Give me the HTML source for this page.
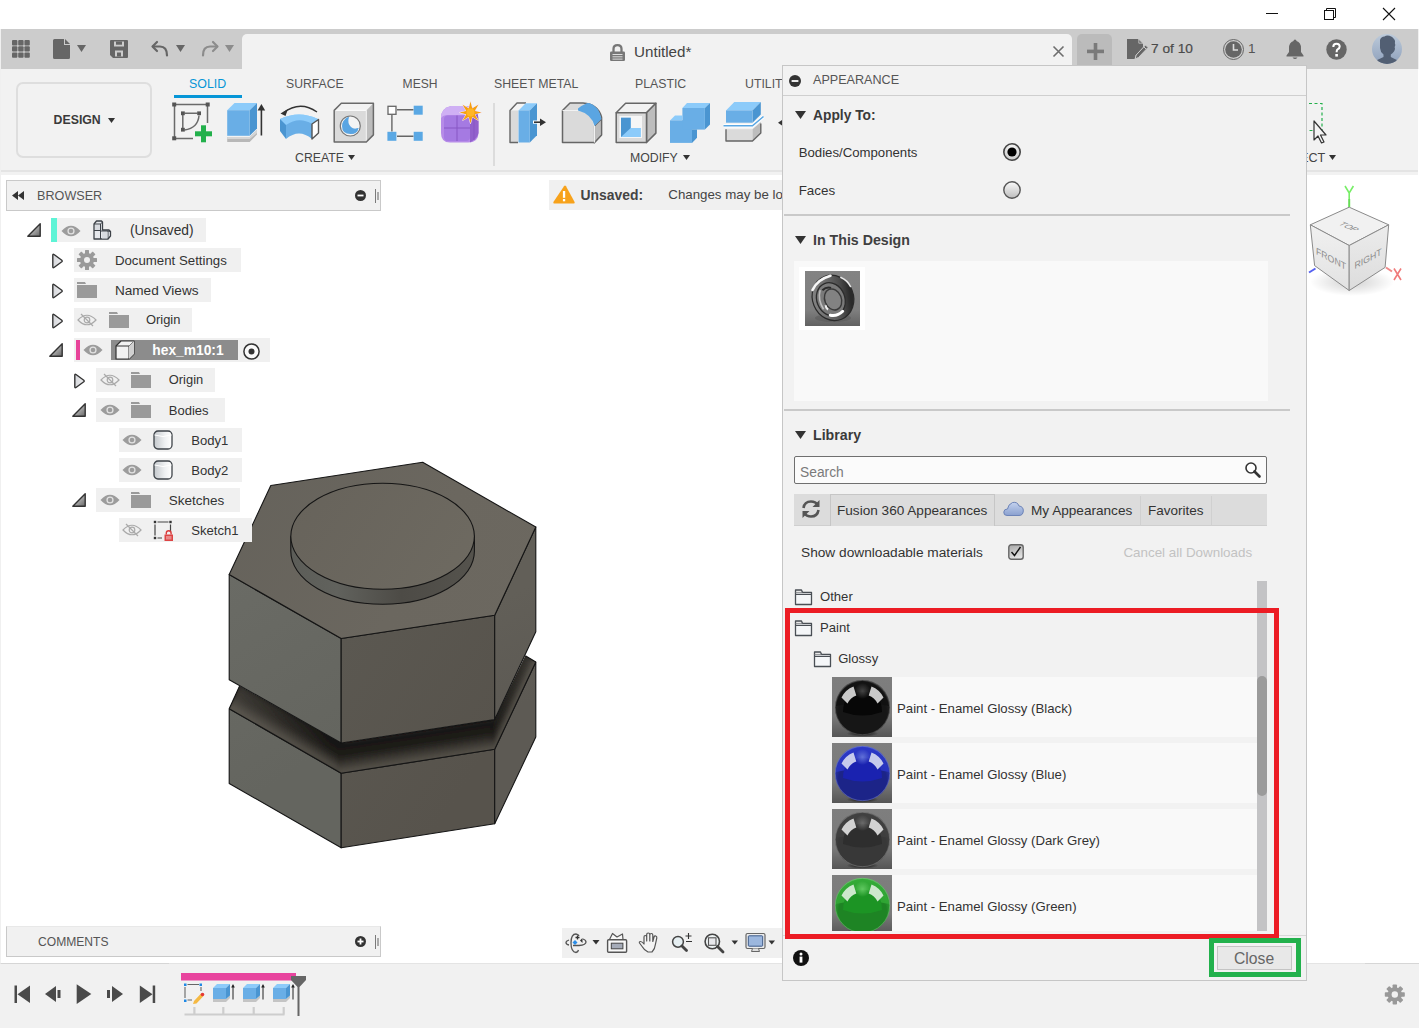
<!DOCTYPE html>
<html><head><meta charset="utf-8">
<style>
*{box-sizing:border-box;margin:0;padding:0}
html,body{width:1419px;height:1028px;overflow:hidden;background:#fff;font-family:"Liberation Sans",sans-serif;color:#3c3c3c}
.a{position:absolute}
.t{position:absolute;white-space:nowrap;line-height:1}
svg{position:absolute;overflow:visible}
</style></head><body>
<div class="a" style="left:0px;top:0px;width:1419px;height:29px;background:#fff;"></div>
<svg style="left:1266px;top:13px;" width="12" height="2" viewBox="0 0 12 2"><rect x="0" y="0" width="12" height="1" fill="#111"/></svg>
<svg style="left:1324px;top:8px;" width="12" height="12" viewBox="0 0 12 12"><rect x="0.5" y="2.5" width="9" height="9" fill="none" stroke="#111"/><path d="M2.5 2.5V0.5H11.5V9.5H9.5" fill="none" stroke="#111"/></svg>
<svg style="left:1383px;top:8px;" width="12" height="12" viewBox="0 0 12 12"><path d="M0 0L12 12M12 0L0 12" stroke="#111" stroke-width="1.1"/></svg>
<div class="a" style="left:1px;top:29px;width:1417px;height:40px;background:#cccccc;"></div>
<div class="a" style="left:242px;top:34px;width:830px;height:36px;background:#f2f2f2;border-radius:5px 5px 0 0"></div>
<div class="a" style="left:1077px;top:34px;width:35px;height:31px;background:#bbbbbb;border-radius:5px 5px 0 0"></div>
<svg style="left:12px;top:40px;" width="18" height="18" viewBox="0 0 18 18"><rect x="0.0" y="0.0" width="5.4" height="5.4" rx="1" fill="#666666"/><rect x="6.2" y="0.0" width="5.4" height="5.4" rx="1" fill="#666666"/><rect x="12.4" y="0.0" width="5.4" height="5.4" rx="1" fill="#666666"/><rect x="0.0" y="6.2" width="5.4" height="5.4" rx="1" fill="#666666"/><rect x="6.2" y="6.2" width="5.4" height="5.4" rx="1" fill="#666666"/><rect x="12.4" y="6.2" width="5.4" height="5.4" rx="1" fill="#666666"/><rect x="0.0" y="12.4" width="5.4" height="5.4" rx="1" fill="#666666"/><rect x="6.2" y="12.4" width="5.4" height="5.4" rx="1" fill="#666666"/><rect x="12.4" y="12.4" width="5.4" height="5.4" rx="1" fill="#666666"/></svg>
<svg style="left:53px;top:39px;" width="18" height="20" viewBox="0 0 18 20"><path d="M1.5 0H11V6H17V18.5Q17 20 15.5 20H1.5Q0 20 0 18.5V1.5Q0 0 1.5 0Z" fill="#666666"/><path d="M12 0L17 5H12Z" fill="#666666"/></svg>
<svg style="left:77px;top:45px;" width="9" height="7" viewBox="0 0 9 7"><path d="M0 0H9L4.5 7Z" fill="#666666"/></svg>
<svg style="left:110px;top:40px;" width="18" height="18" viewBox="0 0 18 18"><path d="M1 0H17Q18 0 18 1V17Q18 18 17 18H3L0 15V1Q0 0 1 0Z" fill="#666666"/><rect x="4" y="1.5" width="10" height="5" fill="#cccccc"/><rect x="6" y="1.5" width="6" height="3.2" fill="#666666"/><rect x="5" y="10.5" width="8" height="6" fill="#cccccc"/><rect x="7" y="12.5" width="4" height="4" fill="#666666"/></svg>
<svg style="left:151px;top:41px;" width="18" height="16" viewBox="0 0 18 16"><path d="M6 1L1.5 5.5L6 10" fill="none" stroke="#666666" stroke-width="2.2" stroke-linecap="round" stroke-linejoin="round"/><path d="M2 5.5H9Q16 5.5 16 14.5" fill="none" stroke="#666666" stroke-width="2.2" stroke-linecap="round"/></svg>
<svg style="left:176px;top:45px;" width="9" height="7" viewBox="0 0 9 7"><path d="M0 0H9L4.5 7Z" fill="#666666"/></svg>
<svg style="left:201px;top:41px;" width="18" height="16" viewBox="0 0 18 16"><path d="M12 1L16.5 5.5L12 10" fill="none" stroke="#8c8c8c" stroke-width="2.2" stroke-linecap="round" stroke-linejoin="round"/><path d="M16 5.5H9Q2 5.5 2 14.5" fill="none" stroke="#8c8c8c" stroke-width="2.2" stroke-linecap="round"/></svg>
<svg style="left:225px;top:45px;" width="9" height="7" viewBox="0 0 9 7"><path d="M0 0H9L4.5 7Z" fill="#8c8c8c"/></svg>
<svg style="left:610px;top:44px;" width="15" height="17" viewBox="0 0 15 17"><path d="M3.5 8V5Q3.5 1.2 7.5 1.2Q11.5 1.2 11.5 5V8" fill="none" stroke="#777" stroke-width="2.3"/><rect x="0" y="7.5" width="15" height="9.5" rx="1.2" fill="#777"/><rect x="2.5" y="10" width="10" height="1" fill="#ddd"/><rect x="2.5" y="12.3" width="10" height="1" fill="#ddd"/><rect x="2.5" y="14.6" width="10" height="1" fill="#ddd"/></svg>
<div class="t" style="left:634px;top:44px;font-size:15.2px;color:#444;font-weight:400;">Untitled*</div>
<svg style="left:1053px;top:46px;" width="11" height="11" viewBox="0 0 11 11"><path d="M0.5 0.5L10.5 10.5M10.5 0.5L0.5 10.5" stroke="#6e6e6e" stroke-width="1.6"/></svg>
<svg style="left:1087px;top:43px;" width="17" height="17" viewBox="0 0 17 17"><rect x="0" y="6.6" width="17" height="3.6" fill="#7a7a7a"/><rect x="6.7" y="0" width="3.6" height="17" fill="#7a7a7a"/></svg>
<svg style="left:1127px;top:39px;" width="21" height="20" viewBox="0 0 21 20"><path d="M0 0H11L16 5V8.5L8.5 16.5V20H0Z" fill="#666666"/><path d="M11.8 0.3L15.7 4.2H11.8Z" fill="#666666" stroke="#ccc" stroke-width="0.8"/><path d="M18.5 6L21 8.5L11.5 18.5L8 20L9.2 16Z" fill="#666666" stroke="#cccccc" stroke-width="1"/><path d="M16.8 7.8L19.2 10.2" stroke="#ccc" stroke-width="1"/></svg>
<div class="t" style="left:1151px;top:42px;font-size:13.7px;color:#4a4a4a;font-weight:400;-webkit-text-stroke:0.2px #4a4a4a">7 of 10</div>
<svg style="left:1223px;top:39px;" width="21" height="21" viewBox="0 0 21 21"><circle cx="10.5" cy="10.5" r="10" fill="none" stroke="#666666" stroke-width="1"/><circle cx="10.5" cy="10.5" r="8.3" fill="#666666"/><path d="M10.5 5V11H15" fill="none" stroke="#ddd" stroke-width="1.6"/></svg>
<div class="t" style="left:1248px;top:42px;font-size:13.5px;color:#555;font-weight:400;">1</div>
<svg style="left:1286px;top:39px;" width="18" height="21" viewBox="0 0 18 21"><path d="M9 0.5Q10.5 0.5 10.5 2Q15 3.5 15 9V13L17.5 16.5V17.5H0.5V16.5L3 13V9Q3 3.5 7.5 2Q7.5 0.5 9 0.5Z" fill="#666666"/><path d="M6.5 18.5Q9 21.5 11.5 18.5Z" fill="#666666"/></svg>
<svg style="left:1326px;top:39px;" width="21" height="21" viewBox="0 0 21 21"><circle cx="10.5" cy="10.5" r="10.2" fill="#666666"/><path d="M7.3 8Q7.3 4.8 10.5 4.8Q13.7 4.8 13.7 7.6Q13.7 9.4 11.6 10.4Q10.6 11 10.6 13.2" fill="none" stroke="#fff" stroke-width="2"/><rect x="9.3" y="15" width="2.6" height="2.6" fill="#fff"/></svg>
<svg style="left:1372px;top:34px;" width="30" height="30" viewBox="0 0 30 30"><defs><linearGradient id="avg" x1="0" y1="0" x2="0" y2="1"><stop offset="0" stop-color="#bccada"/><stop offset="1" stop-color="#8fa1bc"/></linearGradient><clipPath id="avc"><circle cx="15" cy="15" r="15"/></clipPath></defs><circle cx="15" cy="15" r="15" fill="url(#avg)"/><g clip-path="url(#avc)" fill="#525f73"><path d="M8 6Q9 2.5 12.5 2.5Q14.5 0.8 17.5 1.8Q20.5 2.5 22 5Q23.6 7 22.8 9Q23.8 11.5 22.6 13Q23.6 15.5 22 17.5Q20.5 19.5 18.8 20.5V23Q22 24.5 26 26.5L31 31H-1L4 26.5Q8 24.5 11.5 23V20.5Q8.3 18 8 14Z"/></g></svg>
<div class="a" style="left:1px;top:69px;width:1417px;height:102px;background:#f2f2f2;"></div>
<div class="a" style="left:1px;top:170px;width:1417px;height:2px;background:#e4e4e4;"></div>
<div class="a" style="left:1px;top:172px;width:1417px;height:3px;background:#f2f2f2;"></div>
<div class="a" style="left:0px;top:29px;width:1px;height:999px;background:#f0f0f0;"></div>
<div class="a" style="left:1418px;top:29px;width:1px;height:40px;background:#f0f0f0;"></div>
<div class="a" style="left:16px;top:82px;width:136px;height:76px;background:transparent;border:2px solid #dedede;border-radius:7px"></div>
<div class="t" style="left:53.6px;top:114px;font-size:12.3px;color:#3a3a3a;font-weight:700;">DESIGN</div>
<svg style="left:108px;top:118px;" width="7" height="5" viewBox="0 0 7 5"><path d="M0 0H7L3.5 5Z" fill="#333"/></svg>
<div class="t" style="left:189px;top:78px;font-size:12.4px;color:#0696d7;font-weight:400;">SOLID</div>
<div class="a" style="left:174px;top:95px;width:68px;height:3px;background:#0696d7;"></div>
<div class="t" style="left:286px;top:78px;font-size:12.2px;color:#555;font-weight:400;">SURFACE</div>
<div class="t" style="left:402.6px;top:78px;font-size:12.1px;color:#555;font-weight:400;">MESH</div>
<div class="t" style="left:494px;top:78px;font-size:12.3px;color:#555;font-weight:400;">SHEET METAL</div>
<div class="t" style="left:635px;top:78px;font-size:12.3px;color:#555;font-weight:400;">PLASTIC</div>
<div class="t" style="left:745px;top:78px;font-size:12.3px;color:#555;font-weight:400;">UTILITIES</div>
<div class="t" style="left:295px;top:152px;font-size:12.3px;color:#444;font-weight:400;">CREATE</div>
<svg style="left:348px;top:155px;" width="7" height="5" viewBox="0 0 7 5"><path d="M0 0H7L3.5 5Z" fill="#333"/></svg>
<div class="t" style="left:630px;top:152px;font-size:12.3px;color:#444;font-weight:400;">MODIFY</div>
<svg style="left:683px;top:155px;" width="7" height="5" viewBox="0 0 7 5"><path d="M0 0H7L3.5 5Z" fill="#333"/></svg>
<div class="a" style="left:493px;top:103px;width:1.5px;height:63px;background:#dcdcdc;"></div>
<svg style="left:0px;top:0px;" width="1419" height="1028" viewBox="0 0 1419 1028"><g stroke="#6a6a6a" stroke-width="1.5" fill="none"><path d="M174.5 104.5H207.5M174.5 104.5V138.5H193M207.5 104.5V123"/><path d="M182.8 115V129.5M184.5 113.2H197.5M199 115.5Q198 128 184.5 130"/></g><rect x="172.2" y="102.5" width="4" height="4" fill="#555"/><rect x="205.7" y="102.5" width="4" height="4" fill="#555"/><rect x="172.2" y="136.3" width="4" height="4" fill="#555"/><rect x="181" y="111.4" width="3.8" height="3.8" fill="#555"/><rect x="197.2" y="111.4" width="3.8" height="3.8" fill="#555"/><rect x="181" y="127.8" width="3.8" height="3.8" fill="#555"/><rect x="195" y="131.3" width="17" height="5" fill="#22b04b"/><rect x="201" y="125.3" width="5" height="17" fill="#22b04b"/><polygon points="227.2,137 249.7,137 257,130 257,134.5 249.7,142 227.2,142" fill="#b8b8b8"/><polygon points="227.2,137 249.7,137 257,130 257,133 249.7,139 227.2,139" fill="#d6d6d6"/><polygon points="227.2,110.2 234.5,102.9 257.0,102.9 249.7,110.2" fill="#8ccbfa" /><polygon points="249.7,110.2 257.0,102.9 257.0,128.5 249.7,135.8" fill="#4a95d1" /><rect x="227.2" y="110.2" width="22.5" height="25.6" fill="#69aee6" /><path d="M261.4 135.5V107" stroke="#333" stroke-width="1.6"/><path d="M257.6 110.5L261.4 104L265.2 110.5Z" fill="#333"/><path d="M283 113Q300 100 317 112" fill="none" stroke="#333" stroke-width="1.4"/><path d="M280.5 113.5L288 109L285.5 116Z" fill="#333"/><path d="M280 119Q299 110 318 119V129Q299 121 287 130Q283 132 280 129Z" fill="#8ccbfa"/><path d="M280 119L286 125Q299 116 312 124L318 119Q299 110 280 119Z" fill="#8ccbfa"/><path d="M286 125Q299 116 312 124V139Q299 128 286 139Z" fill="#69aee6"/><path d="M280 119L286 125V139L280 131Z" fill="#4a95d1"/><path d="M312 124L318.5 119.5V133L312 139Z" fill="#fff" stroke="#555" stroke-width="1.4" stroke-linejoin="round"/><polygon points="334.2,110.4 341.3,103.30000000000001 373.40000000000003,103.30000000000001 366.3,110.4" fill="#f2f2f2" /><polygon points="366.3,110.4 373.40000000000003,103.30000000000001 373.40000000000003,134.9 366.3,142.0" fill="#bdbdbd" /><rect x="334.2" y="110.4" width="32.1" height="31.6" fill="#dadada" /><path d="M334.2 110.4H366.3" stroke="#fafafa" stroke-width="1.2"/><path d="M366.3 110.4V142" stroke="#f4f4f4" stroke-width="1"/><path d="M334.2 110.4L341.3 103.3H373.4V134.9L366.3 142H334.2Z" fill="none" stroke="#6a6a6a" stroke-width="1.5" stroke-linejoin="round"/><circle cx="350.3" cy="126" r="10" fill="#f4f4f4" stroke="#777" stroke-width="1.2"/><path d="M343.5 121Q342 131 350.5 133.5Q357 134 358.5 128Q351 131 347.5 125Q346 122 347 119Z" fill="#5aa5e2"/><path d="M344 120.5Q346 117 349 117Q347 123 351 127Q354 130 358.5 128Q357.5 134 350.5 134Q342 134 342 126Q342 122.5 344 120.5Z" fill="#5aa5e2"/><path d="M397 109.8H413.5M391.9 115V131.5M397 136.3H413.5" stroke="#666" stroke-width="1.4"/><rect x="388" y="106.3" width="8" height="8" fill="#fff" stroke="#666" stroke-width="1.3"/><rect x="413.7" y="105.7" width="9" height="9" fill="#5aa8e4"/><rect x="387.4" y="131.8" width="9" height="9" fill="#5aa8e4"/><rect x="413.7" y="131.8" width="9" height="9" fill="#5aa8e4"/><path d="M441 118Q441 108 451 106H466Q474 106 477 112Q478.5 116 478.5 122V133Q478.5 142.5 468 142.5H450Q441 142.5 441 133Z" fill="#b68be8"/><path d="M441 118Q441 108 451 106H466Q474 106 477 112L470 115H448Q443 115 441 118Z" fill="#cfb0f4"/><path d="M470 115L477 111Q478.5 116 478.5 122V133Q478 138 470 142.5Z" fill="#9261cc"/><path d="M444 119Q444 115.5 448 115.5H466Q470 115.5 470 119.5V137Q470 141 466 141H448Q444 141 444 137Z" fill="#a57ae2"/><path d="M457 115.5V141M444 128H470M474 113V140" stroke="#8756c4" stroke-width="1"/><polygon points="470.5,101.6 472.2,108.4 478.3,104.8 474.7,110.9 481.5,112.6 474.7,114.3 478.3,120.4 472.2,116.8 470.5,123.6 468.8,116.8 462.7,120.4 466.3,114.3 459.5,112.6 466.3,110.9 462.7,104.8 468.8,108.4" fill="#f5a00f" stroke="#f4e6ff" stroke-width="1" stroke-linejoin="round"/><polygon points="470.5,101.6 472.2,108.4 478.3,104.8 474.7,110.9 481.5,112.6 474.7,114.3 478.3,120.4 472.2,116.8 470.5,123.6 468.8,116.8 462.7,120.4 466.3,114.3 459.5,112.6 466.3,110.9 462.7,104.8 468.8,108.4" fill="#f5a00f"/><circle cx="470.5" cy="112.6" r="4" fill="#ffb527"/><path d="M510 110.5L517 103H526V142.5H510Z" fill="#f4f4f4"/><path d="M510 110.5H518V142.5H510Z" fill="#dadada"/><path d="M526 103H517L510 110.5V142.5H518" fill="none" stroke="#666" stroke-width="1.4" stroke-linejoin="round"/><polygon points="518.5,110.4 525.7,103.2 537.0,103.2 529.8,110.4" fill="#8ccbfa" /><polygon points="529.8,110.4 537.0,103.2 537.0,135.3 529.8,142.5" fill="#4a95d1" /><rect x="518.5" y="110.4" width="11.3" height="32.1" fill="#69aee6" /><rect x="533" y="120.5" width="6" height="3.2" fill="#fff"/><path d="M534 122.2H541" stroke="#333" stroke-width="1.6"/><path d="M540 118.5L546 122.2L540 126Z" fill="#333"/><path d="M562.5 110.5L570 103H583Q598 104 601.5 117V135L594.5 142.5H562.5Z" fill="#dadada" stroke="#666" stroke-width="1.5" stroke-linejoin="round"/><path d="M594.5 126L601.5 119V135L594.5 142.5Z" fill="#bdbdbd" stroke="#666" stroke-width="1.2"/><path d="M562.5 110.5H578Q592 111 594.5 126V142.5" fill="none" stroke="#f2f2f2" stroke-width="1.2"/><path d="M578 108.5Q585 103 589 103Q599 106 601.5 119L594.5 126Q591.5 114 578 110.5Z" fill="#5aa5e2"/><path d="M575 103Q585 103 589 103" stroke="#666" stroke-width="0"/><polygon points="616.2,112.7 625.6,103.3 655.9,103.3 646.5,112.7" fill="#f2f2f2" stroke="#666" stroke-width="1.5" stroke-linejoin="round"/><polygon points="646.5,112.7 655.9,103.3 655.9,133.1 646.5,142.5" fill="#bdbdbd" stroke="#666" stroke-width="1.5" stroke-linejoin="round"/><rect x="616.2" y="112.7" width="30.3" height="29.8" fill="#dadada" stroke="#666" stroke-width="1.5" stroke-linejoin="round"/><rect x="619.4" y="116" width="22.6" height="22" fill="#f6f6f6"/><path d="M621 117.7H630.7V127.9H640.9V136.9H621Z" fill="#8ccbfa"/><path d="M621 117.7H630.7V127.9L621 136.9Z" fill="#4a95d1"/><polygon points="682.4,108 687,103 710,103 704.9,108" fill="#8ccbfa"/><polygon points="704.9,108 710,103 710,124.5 704.9,129.6" fill="#4a95d1"/><rect x="682.4" y="108" width="22.5" height="21.6" fill="#69aee6"/><polygon points="670,120.4 675,115.4 682.4,115.4 682.4,120.4" fill="#8ccbfa"/><polygon points="692,129.6 697,129.6 697,137.8 692,142.9" fill="#4a95d1"/><rect x="670" y="120.4" width="22" height="22.5" fill="#69aee6"/><rect x="682.4" y="120.4" width="9.6" height="9.2" fill="#69aee6"/><polygon points="726,110.4 734.3,102.10000000000001 760.8,102.10000000000001 752.5,110.4" fill="#8ccbfa" /><polygon points="752.5,110.4 760.8,102.10000000000001 760.8,114.4 752.5,122.7" fill="#4a95d1" /><rect x="726" y="110.4" width="26.5" height="12.3" fill="#69aee6" /><path d="M723.5 125.8H752.5L763.5 116.5" fill="none" stroke="#fff" stroke-width="3.4"/><path d="M723.5 125.8H752.5L763.5 116.5" fill="none" stroke="#5aa8e4" stroke-width="1.6"/><rect x="726" y="129.2" width="26.5" height="11.8" fill="#dadada"/><path d="M752.5 129.2L760.8 122V133.5L752.5 141Z" fill="#bdbdbd"/><path d="M726 129.2V141H752.5L760.8 133V123.5" fill="none" stroke="#666" stroke-width="1.4" stroke-linejoin="round"/><path d="M778 122.8L782 120V125.6Z" fill="#333"/></svg>
<svg style="left:0px;top:0px;" width="1419" height="1028" viewBox="0 0 1419 1028"><defs><radialGradient id="cshadow" cx="0.5" cy="0.5" r="0.5"><stop offset="0" stop-color="#000" stop-opacity="0.18"/><stop offset="1" stop-color="#000" stop-opacity="0"/></radialGradient><linearGradient id="cfl" x1="0" y1="0" x2="0" y2="1"><stop offset="0" stop-color="#f0f0f0"/><stop offset="1" stop-color="#e2e2e2"/></linearGradient><linearGradient id="cfr" x1="0" y1="0" x2="0" y2="1"><stop offset="0" stop-color="#ececec"/><stop offset="1" stop-color="#dcdcdc"/></linearGradient></defs><ellipse cx="1352" cy="282" rx="42" ry="14" fill="url(#cshadow)"/><polygon points="1349.2,207.2 1388.7,224.8 1349.2,245.5 1310.3,224.8" fill="#f1f1f1" stroke="#8a8a8a" stroke-width="1" stroke-linejoin="round"/><polygon points="1310.3,224.8 1349.2,245.5 1349.2,290.5 1314.6,265.6" fill="url(#cfl)" stroke="#8a8a8a" stroke-width="1" stroke-linejoin="round"/><polygon points="1349.2,245.5 1388.7,224.8 1385.1,267.4 1349.2,290.5" fill="url(#cfr)" stroke="#8a8a8a" stroke-width="1" stroke-linejoin="round"/><g transform="matrix(0.82 0.37 -0.82 0.37 1349.5 226.5)"><text x="0" y="4" font-size="10" fill="#8c8c8c" font-family="Liberation Sans" text-anchor="middle">TOP</text></g><g transform="matrix(0.92 0.49 0 1 1331 258)"><text x="0" y="4" font-size="9.5" fill="#8c8c8c" font-family="Liberation Sans" text-anchor="middle">FRONT</text></g><g transform="matrix(0.92 -0.49 0 1 1368 258)"><text x="0" y="4" font-size="9.5" fill="#8c8c8c" font-family="Liberation Sans" text-anchor="middle">RIGHT</text></g><path d="M1349.2 207V199" stroke="#66dd55" stroke-width="2"/><path d="M1345 186L1349.2 193L1353.4 186M1349.2 193V199" fill="none" stroke="#77ee66" stroke-width="1.6"/><path d="M1386 267.5L1392 271.5" stroke="#f08a8a" stroke-width="2"/><path d="M1394 268.5L1401 280M1401 268.5L1394 280" stroke="#f07a7a" stroke-width="1.6"/><path d="M1309 272.5L1315.5 268.5" stroke="#5560f0" stroke-width="2"/><path d="M1309 103.5H1322V130.5H1309" fill="none" stroke="#22b04b" stroke-width="1.2" stroke-dasharray="3 2.5"/><path d="M1314 121V140L1318 136L1321.5 143L1324 142L1320.5 135H1326Z" fill="#f4f4f4" stroke="#333" stroke-width="1.2" stroke-linejoin="round"/></svg>
<div class="t" style="left:1300px;top:152px;font-size:12.6px;color:#444;font-weight:400;">ECT</div>
<svg style="left:1328.5px;top:155.2px;" width="7" height="5" viewBox="0 0 7 5"><path d="M0 0H7L3.5 5Z" fill="#333"/></svg>
<div class="a" style="left:549px;top:180px;width:240px;height:30px;background:#f0f0f0;"></div>
<svg style="left:552.5px;top:185px;" width="22" height="19" viewBox="0 0 22 19"><path d="M11 1.2Q12 0 13 1.2L21.6 17Q22.2 18.6 20.6 18.6H1.4Q-0.2 18.6 0.4 17Z" fill="#f7a21b"/><rect x="9.9" y="6" width="2.3" height="6.8" fill="#fff"/><rect x="9.9" y="14" width="2.3" height="2.3" fill="#fff"/></svg>
<div class="t" style="left:580.5px;top:189px;font-size:13.9px;color:#444;font-weight:700;">Unsaved:</div>
<div class="t" style="left:668.3px;top:188px;font-size:13.3px;color:#444;font-weight:400;">Changes may be lost</div>
<svg style="left:0px;top:0px;" width="1419" height="1028" viewBox="0 0 1419 1028"><defs>
<linearGradient id="ntop" gradientUnits="userSpaceOnUse" x1="230" y1="470" x2="535" y2="640"><stop offset="0" stop-color="#65625b"/><stop offset="0.6" stop-color="#6b675f"/><stop offset="1" stop-color="#6c6860"/></linearGradient>
<linearGradient id="nleft" gradientUnits="userSpaceOnUse" x1="229" y1="575" x2="341" y2="740"><stop offset="0" stop-color="#6a6b65"/><stop offset="1" stop-color="#64655f"/></linearGradient>
<linearGradient id="nfront" gradientUnits="userSpaceOnUse" x1="341" y1="640" x2="495" y2="740"><stop offset="0" stop-color="#5b5851"/><stop offset="1" stop-color="#57534c"/></linearGradient>
<linearGradient id="nright" gradientUnits="userSpaceOnUse" x1="495" y1="600" x2="536" y2="700"><stop offset="0" stop-color="#625f58"/><stop offset="1" stop-color="#5d5a54"/></linearGradient>
<linearGradient id="ngap" gradientUnits="userSpaceOnUse" x1="0" y1="690" x2="0" y2="775"><stop offset="0" stop-color="#181715"/><stop offset="0.35" stop-color="#211f1b"/><stop offset="1" stop-color="#5c5850"/></linearGradient>
<radialGradient id="ngap2" gradientUnits="userSpaceOnUse" cx="400" cy="745" r="150"><stop offset="0" stop-color="#000" stop-opacity="0.25"/><stop offset="1" stop-color="#000" stop-opacity="0"/></radialGradient>
<linearGradient id="nrg" gradientUnits="userSpaceOnUse" x1="495" y1="0" x2="536" y2="0"><stop offset="0" stop-color="#5a564f" stop-opacity="0"/><stop offset="1" stop-color="#5a564f" stop-opacity="0.9"/></linearGradient>
<linearGradient id="nlg" gradientUnits="userSpaceOnUse" x1="229" y1="0" x2="300" y2="0"><stop offset="0" stop-color="#5a564f" stop-opacity="0.8"/><stop offset="1" stop-color="#5a564f" stop-opacity="0"/></linearGradient>
<linearGradient id="ncyl" gradientUnits="userSpaceOnUse" x1="291" y1="0" x2="475" y2="0"><stop offset="0" stop-color="#5c5d58"/><stop offset="0.25" stop-color="#61625d"/><stop offset="0.6" stop-color="#4d4b46"/><stop offset="1" stop-color="#55534d"/></linearGradient>
<linearGradient id="nctop" gradientUnits="userSpaceOnUse" x1="300" y1="480" x2="470" y2="590"><stop offset="0" stop-color="#67635b"/><stop offset="1" stop-color="#6e6a61"/></linearGradient>
</defs><polygon points="229.2,708.7 341.2,773.3 341.2,847.8 229.2,783.4" fill="url(#nleft)" stroke="#151515" stroke-width="1.1" stroke-linejoin="round"/><polygon points="341.2,773.3 494.7,749.2 494.7,823.8 341.2,847.8" fill="url(#nfront)" stroke="#151515" stroke-width="1.1" stroke-linejoin="round"/><polygon points="494.7,749.2 535.8,662.0 535.8,737.0 494.7,823.8" fill="url(#nright)" stroke="#151515" stroke-width="1.1" stroke-linejoin="round"/><defs><linearGradient id="ngl1" gradientUnits="userSpaceOnUse" x1="290" y1="714.5" x2="277.2" y2="737.1"><stop offset="0" stop-color="#161512"/><stop offset="0.45" stop-color="#1f1d1a"/><stop offset="1" stop-color="#57534b"/></linearGradient><linearGradient id="ngl2" gradientUnits="userSpaceOnUse" x1="418" y1="731" x2="422.5" y2="760.6"><stop offset="0" stop-color="#161512"/><stop offset="0.45" stop-color="#1f1d1a"/><stop offset="1" stop-color="#57534b"/></linearGradient><linearGradient id="ngl3" gradientUnits="userSpaceOnUse" x1="510" y1="687" x2="521.5" y2="692.4"><stop offset="0" stop-color="#161512"/><stop offset="0.45" stop-color="#1f1d1a"/><stop offset="1" stop-color="#57534b"/></linearGradient><linearGradient id="glx" gradientUnits="userSpaceOnUse" x1="229" y1="0" x2="330" y2="0"><stop offset="0" stop-color="#6a665e" stop-opacity="0.45"/><stop offset="1" stop-color="#6a665e" stop-opacity="0"/></linearGradient><linearGradient id="glr" gradientUnits="userSpaceOnUse" x1="0" y1="740" x2="0" y2="655"><stop offset="0" stop-color="#6a665e" stop-opacity="0"/><stop offset="1" stop-color="#6a665e" stop-opacity="0.35"/></linearGradient></defs><defs><clipPath id="gapclip"><polygon points="239.6,686.0 341.2,743.0 494.7,719.6 525.4,655.8 535.8,662.0 494.7,749.2 341.2,773.3 229.2,708.7"/></clipPath><filter id="gapblur" x="-5%" y="-20%" width="110%" height="140%"><feGaussianBlur stdDeviation="2.2"/></filter></defs><polygon points="239.6,686.0 341.2,743.0 494.7,719.6 525.4,655.8 535.8,662.0 494.7,749.2 341.2,773.3 229.2,708.7" fill="#2a2824"/><g clip-path="url(#gapclip)"><g filter="url(#gapblur)"><polygon points="239.6,686.0 345.0,740.0 345.0,776.0 225.0,710.0 225.0,680.0" fill="url(#ngl1)"/><polygon points="337.0,743.0 494.7,719.6 498.0,712.0 498.0,752.0 337.0,776.0" fill="url(#ngl2)"/><polygon points="490.0,726.0 525.4,655.8 540.0,650.0 540.0,662.0 494.7,756.0" fill="url(#ngl3)"/><polygon points="239.6,686.0 341.2,743.0 341.2,773.3 229.2,708.7" fill="url(#glx)"/><polygon points="494.7,719.6 525.4,655.8 535.8,662.0 494.7,749.2" fill="url(#glr)"/></g></g><polyline points="229.2,708.7 341.2,773.3 494.7,749.2 535.8,662.0" fill="none" stroke="#151515" stroke-width="1.1" stroke-linejoin="round"/><polyline points="229.2,708.7 239.6,686.0" fill="none" stroke="#151515" stroke-width="1.1" stroke-linejoin="round"/><polyline points="535.8,662.0 525.4,655.8" fill="none" stroke="#151515" stroke-width="1.1" stroke-linejoin="round"/><polygon points="229.2,574.6 341.2,638.5 341.2,743.0 229.2,679.7" fill="url(#nleft)" stroke="#151515" stroke-width="1.1" stroke-linejoin="round"/><polygon points="341.2,638.5 494.7,615.2 494.7,719.6 341.2,743.0" fill="url(#nfront)" stroke="#151515" stroke-width="1.1" stroke-linejoin="round"/><polygon points="494.7,615.2 535.8,527.1 535.8,631.7 494.7,719.6" fill="url(#nright)" stroke="#151515" stroke-width="1.1" stroke-linejoin="round"/><polygon points="422.7,462.3 535.8,527.1 494.7,615.2 341.2,638.5 229.2,574.6 270.8,485.5" fill="url(#ntop)" stroke="#151515" stroke-width="1.1" stroke-linejoin="round"/><path d="M290.8,536.3 V551.3 A91.8,53.0 0 0 0 474.4,551.3 V536.3 Z" fill="url(#ncyl)" stroke="#151515" stroke-width="1.1" stroke-linejoin="round"/><ellipse cx="382.6" cy="536.3" rx="91.8" ry="53.0" fill="url(#nctop)" stroke="#151515" stroke-width="1.1" stroke-linejoin="round"/></svg>
<div class="a" style="left:6px;top:180px;width:375px;height:31px;background:#f1f1f1;border:1px solid #c9c9c9"></div>
<svg style="left:12px;top:191px;" width="13" height="9" viewBox="0 0 13 9"><path d="M0 4.5L6 0V9Z M6 4.5L12 0V9Z" fill="#333"/></svg>
<div class="t" style="left:37.1px;top:190px;font-size:12.6px;color:#555;font-weight:400;">BROWSER</div>
<svg style="left:355px;top:190px;" width="11" height="11" viewBox="0 0 11 11"><circle cx="5.5" cy="5.5" r="5.5" fill="#333"/><rect x="2.5" y="4.6" width="6" height="1.8" fill="#fff"/></svg>
<div class="a" style="left:374.8px;top:189px;width:1.2px;height:13.5px;background:#7a7a7a;"></div>
<div class="a" style="left:377.3px;top:191.5px;width:1.6px;height:8.5px;background:#aaaaaa;"></div>
<div class="a" style="left:51px;top:218px;width:155px;height:24px;background:#f0f0f0;"></div>
<div class="a" style="left:51px;top:218px;width:6px;height:24px;background:#5ef4d6;"></div>
<svg style="left:27px;top:223px;" width="14" height="14" viewBox="0 0 14 14"><defs><linearGradient id="tg1" x1="0" y1="0" x2="1" y2="1"><stop offset="0" stop-color="#eee"/><stop offset="1" stop-color="#666"/></linearGradient></defs><path d="M13.2 0.8V13.2H0.8Z" fill="url(#tg1)" stroke="#333" stroke-width="1.4" stroke-linejoin="round"/></svg>
<svg style="left:61px;top:224.5px;" width="20" height="12" viewBox="0 0 20 12"><path d="M0.5 6Q10 -4.5 19.5 6Q10 16.5 0.5 6Z" fill="#9c9c9c"/><circle cx="10" cy="6" r="3.6" fill="#e2e2e2"/><circle cx="10" cy="6" r="2.3" fill="#9c9c9c"/></svg>
<svg style="left:92px;top:220px;" width="21" height="20" viewBox="0 0 21 20"><path d="M2 4L4.5 1H9.5L10.5 2V10H17L18.5 11.5V16L16 19H2Z" fill="#e6e8ec" stroke="#3d4248" stroke-width="1.3" stroke-linejoin="round"/><path d="M2 4H8.5V19M8.5 4L10.5 2M8.5 11H16L18.5 11.5M16 11V19M2 10.5H8.5" fill="none" stroke="#3d4248" stroke-width="1"/><rect x="10" y="12" width="5.5" height="6.5" fill="#d8dbe0"/><rect x="3" y="5" width="5" height="5" fill="#d8dbe0"/></svg>
<div class="t" style="left:130px;top:224px;font-size:13.8px;color:#333;font-weight:400;">(Unsaved)</div>
<div class="a" style="left:74px;top:248px;width:167px;height:24px;background:#f0f0f0;"></div>
<svg style="left:51px;top:252.5px;" width="12" height="16" viewBox="0 0 12 16"><defs><linearGradient id="tcg" x1="0" y1="0" x2="1" y2="0"><stop offset="0" stop-color="#d4d6da"/><stop offset="1" stop-color="#f0f0f2"/></linearGradient></defs><path d="M1.8 2.2Q1.8 0.8 3 1.5L10.8 7.2Q11.6 8 10.8 8.8L3 14.5Q1.8 15.2 1.8 13.8Z" fill="url(#tcg)" stroke="#333" stroke-width="1.4" stroke-linejoin="round"/></svg>
<svg style="left:77px;top:250px;" width="20" height="20" viewBox="0 0 20 20"><rect x="8" y="0" width="4" height="20" rx="0.5" fill="#9a9a9a" transform="rotate(0 10 10)"/><rect x="8" y="0" width="4" height="20" rx="0.5" fill="#9a9a9a" transform="rotate(45 10 10)"/><rect x="8" y="0" width="4" height="20" rx="0.5" fill="#9a9a9a" transform="rotate(90 10 10)"/><rect x="8" y="0" width="4" height="20" rx="0.5" fill="#9a9a9a" transform="rotate(135 10 10)"/><circle cx="10" cy="10" r="7" fill="#9a9a9a"/><circle cx="10" cy="10" r="3" fill="#f0f0f0"/></svg>
<div class="t" style="left:114.9px;top:254px;font-size:13.25px;color:#333;font-weight:400;">Document Settings</div>
<div class="a" style="left:74px;top:278px;width:137px;height:24px;background:#f0f0f0;"></div>
<svg style="left:51px;top:282.5px;" width="12" height="16" viewBox="0 0 12 16"><defs><linearGradient id="tcg" x1="0" y1="0" x2="1" y2="0"><stop offset="0" stop-color="#d4d6da"/><stop offset="1" stop-color="#f0f0f2"/></linearGradient></defs><path d="M1.8 2.2Q1.8 0.8 3 1.5L10.8 7.2Q11.6 8 10.8 8.8L3 14.5Q1.8 15.2 1.8 13.8Z" fill="url(#tcg)" stroke="#333" stroke-width="1.4" stroke-linejoin="round"/></svg>
<svg style="left:77px;top:281.5px;" width="20" height="16" viewBox="0 0 20 16"><path d="M0 0H8L9 2H0Z" fill="#9a9a9a"/><rect x="0" y="3" width="20" height="13" fill="#9a9a9a"/></svg>
<div class="t" style="left:114.9px;top:284px;font-size:13.6px;color:#333;font-weight:400;">Named Views</div>
<div class="a" style="left:74px;top:308px;width:118px;height:24px;background:#f0f0f0;"></div>
<svg style="left:51px;top:312.5px;" width="12" height="16" viewBox="0 0 12 16"><defs><linearGradient id="tcg" x1="0" y1="0" x2="1" y2="0"><stop offset="0" stop-color="#d4d6da"/><stop offset="1" stop-color="#f0f0f2"/></linearGradient></defs><path d="M1.8 2.2Q1.8 0.8 3 1.5L10.8 7.2Q11.6 8 10.8 8.8L3 14.5Q1.8 15.2 1.8 13.8Z" fill="url(#tcg)" stroke="#333" stroke-width="1.4" stroke-linejoin="round"/></svg>
<svg style="left:77px;top:314px;" width="20" height="12" viewBox="0 0 20 12"><path d="M1 6Q10 -3.5 19 6Q10 15.5 1 6Z" fill="none" stroke="#aaa" stroke-width="1.2"/><circle cx="10" cy="6" r="2.8" fill="none" stroke="#aaa" stroke-width="1.2"/><path d="M4 0L16 12" stroke="#aaa" stroke-width="1.2"/></svg>
<svg style="left:108.5px;top:311.5px;" width="20" height="16" viewBox="0 0 20 16"><path d="M0 0H8L9 2H0Z" fill="#9a9a9a"/><rect x="0" y="3" width="20" height="13" fill="#9a9a9a"/></svg>
<div class="t" style="left:146px;top:314px;font-size:12.9px;color:#333;font-weight:400;">Origin</div>
<div class="a" style="left:74px;top:338px;width:196px;height:24px;background:#f0f0f0;"></div>
<div class="a" style="left:76px;top:340px;width:4px;height:20px;background:#e8449a;"></div>
<svg style="left:49px;top:343px;" width="14" height="14" viewBox="0 0 14 14"><defs><linearGradient id="tg1" x1="0" y1="0" x2="1" y2="1"><stop offset="0" stop-color="#eee"/><stop offset="1" stop-color="#666"/></linearGradient></defs><path d="M13.2 0.8V13.2H0.8Z" fill="url(#tg1)" stroke="#333" stroke-width="1.4" stroke-linejoin="round"/></svg>
<svg style="left:83px;top:344px;" width="20" height="12" viewBox="0 0 20 12"><path d="M0.5 6Q10 -4.5 19.5 6Q10 16.5 0.5 6Z" fill="#9c9c9c"/><circle cx="10" cy="6" r="3.6" fill="#e2e2e2"/><circle cx="10" cy="6" r="2.3" fill="#9c9c9c"/></svg>
<div class="a" style="left:111px;top:340px;width:127px;height:20px;background:#8c8c8c;"></div>
<svg style="left:115px;top:340px;" width="20" height="20" viewBox="0 0 20 20"><path d="M1 6L6 1H19V14L14 19H1Z" fill="#f2f2f2" stroke="#333" stroke-width="1.2" stroke-linejoin="round"/><path d="M1 6H14V19M14 6L19 1" fill="none" stroke="#333" stroke-width="1"/><path d="M14 6V19L19 14V1Z" fill="#d0d0d0"/></svg>
<div class="t" style="left:152.3px;top:344px;font-size:13.8px;color:#fff;font-weight:700;">hex_m10:1</div>
<svg style="left:243px;top:343px;" width="17" height="17" viewBox="0 0 17 17"><circle cx="8.5" cy="8.5" r="7.6" fill="#fafafa" stroke="#333" stroke-width="1.5"/><circle cx="8.5" cy="8.5" r="3" fill="#333"/></svg>
<div class="a" style="left:96px;top:368px;width:119px;height:24px;background:#f0f0f0;"></div>
<svg style="left:73px;top:372.5px;" width="12" height="16" viewBox="0 0 12 16"><defs><linearGradient id="tcg" x1="0" y1="0" x2="1" y2="0"><stop offset="0" stop-color="#d4d6da"/><stop offset="1" stop-color="#f0f0f2"/></linearGradient></defs><path d="M1.8 2.2Q1.8 0.8 3 1.5L10.8 7.2Q11.6 8 10.8 8.8L3 14.5Q1.8 15.2 1.8 13.8Z" fill="url(#tcg)" stroke="#333" stroke-width="1.4" stroke-linejoin="round"/></svg>
<svg style="left:100px;top:374px;" width="20" height="12" viewBox="0 0 20 12"><path d="M1 6Q10 -3.5 19 6Q10 15.5 1 6Z" fill="none" stroke="#aaa" stroke-width="1.2"/><circle cx="10" cy="6" r="2.8" fill="none" stroke="#aaa" stroke-width="1.2"/><path d="M4 0L16 12" stroke="#aaa" stroke-width="1.2"/></svg>
<svg style="left:131px;top:371.5px;" width="20" height="16" viewBox="0 0 20 16"><path d="M0 0H8L9 2H0Z" fill="#9a9a9a"/><rect x="0" y="3" width="20" height="13" fill="#9a9a9a"/></svg>
<div class="t" style="left:168.8px;top:374px;font-size:12.9px;color:#333;font-weight:400;">Origin</div>
<div class="a" style="left:96px;top:398px;width:129px;height:24px;background:#f0f0f0;"></div>
<svg style="left:72px;top:403px;" width="14" height="14" viewBox="0 0 14 14"><defs><linearGradient id="tg1" x1="0" y1="0" x2="1" y2="1"><stop offset="0" stop-color="#eee"/><stop offset="1" stop-color="#666"/></linearGradient></defs><path d="M13.2 0.8V13.2H0.8Z" fill="url(#tg1)" stroke="#333" stroke-width="1.4" stroke-linejoin="round"/></svg>
<svg style="left:100px;top:404px;" width="20" height="12" viewBox="0 0 20 12"><path d="M0.5 6Q10 -4.5 19.5 6Q10 16.5 0.5 6Z" fill="#9c9c9c"/><circle cx="10" cy="6" r="3.6" fill="#e2e2e2"/><circle cx="10" cy="6" r="2.3" fill="#9c9c9c"/></svg>
<svg style="left:131px;top:401.5px;" width="20" height="16" viewBox="0 0 20 16"><path d="M0 0H8L9 2H0Z" fill="#9a9a9a"/><rect x="0" y="3" width="20" height="13" fill="#9a9a9a"/></svg>
<div class="t" style="left:168.8px;top:404px;font-size:13.0px;color:#333;font-weight:400;">Bodies</div>
<div class="a" style="left:119px;top:428px;width:123px;height:24px;background:#f0f0f0;"></div>
<svg style="left:122px;top:434px;" width="20" height="12" viewBox="0 0 20 12"><path d="M0.5 6Q10 -4.5 19.5 6Q10 16.5 0.5 6Z" fill="#9c9c9c"/><circle cx="10" cy="6" r="3.6" fill="#e2e2e2"/><circle cx="10" cy="6" r="2.3" fill="#9c9c9c"/></svg>
<svg style="left:153px;top:430px;" width="20" height="20" viewBox="0 0 20 20"><defs><linearGradient id="bdg" x1="0" y1="0" x2="1" y2="0"><stop offset="0" stop-color="#c4c8cc"/><stop offset="0.6" stop-color="#eef0f2"/><stop offset="1" stop-color="#fff"/></linearGradient></defs><rect x="1" y="1" width="18" height="18" rx="4" fill="url(#bdg)" stroke="#3d4248" stroke-width="1.3"/><path d="M1.5 5Q10 8 18.5 5" fill="none" stroke="#fff" stroke-width="1"/></svg>
<div class="t" style="left:191.2px;top:434px;font-size:13.1px;color:#333;font-weight:400;">Body1</div>
<div class="a" style="left:119px;top:458px;width:123px;height:24px;background:#f0f0f0;"></div>
<svg style="left:122px;top:464px;" width="20" height="12" viewBox="0 0 20 12"><path d="M0.5 6Q10 -4.5 19.5 6Q10 16.5 0.5 6Z" fill="#9c9c9c"/><circle cx="10" cy="6" r="3.6" fill="#e2e2e2"/><circle cx="10" cy="6" r="2.3" fill="#9c9c9c"/></svg>
<svg style="left:153px;top:460px;" width="20" height="20" viewBox="0 0 20 20"><defs><linearGradient id="bdg" x1="0" y1="0" x2="1" y2="0"><stop offset="0" stop-color="#c4c8cc"/><stop offset="0.6" stop-color="#eef0f2"/><stop offset="1" stop-color="#fff"/></linearGradient></defs><rect x="1" y="1" width="18" height="18" rx="4" fill="url(#bdg)" stroke="#3d4248" stroke-width="1.3"/><path d="M1.5 5Q10 8 18.5 5" fill="none" stroke="#fff" stroke-width="1"/></svg>
<div class="t" style="left:191.2px;top:464px;font-size:13.1px;color:#333;font-weight:400;">Body2</div>
<div class="a" style="left:96px;top:488px;width:144px;height:24px;background:#f0f0f0;"></div>
<svg style="left:72px;top:493px;" width="14" height="14" viewBox="0 0 14 14"><defs><linearGradient id="tg1" x1="0" y1="0" x2="1" y2="1"><stop offset="0" stop-color="#eee"/><stop offset="1" stop-color="#666"/></linearGradient></defs><path d="M13.2 0.8V13.2H0.8Z" fill="url(#tg1)" stroke="#333" stroke-width="1.4" stroke-linejoin="round"/></svg>
<svg style="left:100px;top:494px;" width="20" height="12" viewBox="0 0 20 12"><path d="M0.5 6Q10 -4.5 19.5 6Q10 16.5 0.5 6Z" fill="#9c9c9c"/><circle cx="10" cy="6" r="3.6" fill="#e2e2e2"/><circle cx="10" cy="6" r="2.3" fill="#9c9c9c"/></svg>
<svg style="left:131px;top:491.5px;" width="20" height="16" viewBox="0 0 20 16"><path d="M0 0H8L9 2H0Z" fill="#9a9a9a"/><rect x="0" y="3" width="20" height="13" fill="#9a9a9a"/></svg>
<div class="t" style="left:168.8px;top:494px;font-size:13.5px;color:#333;font-weight:400;">Sketches</div>
<div class="a" style="left:119px;top:518px;width:133px;height:24px;background:#f0f0f0;"></div>
<svg style="left:122px;top:524px;" width="20" height="12" viewBox="0 0 20 12"><path d="M1 6Q10 -3.5 19 6Q10 15.5 1 6Z" fill="none" stroke="#aaa" stroke-width="1.2"/><circle cx="10" cy="6" r="2.8" fill="none" stroke="#aaa" stroke-width="1.2"/><path d="M4 0L16 12" stroke="#aaa" stroke-width="1.2"/></svg>
<svg style="left:153px;top:520px;" width="21" height="21" viewBox="0 0 21 21"><path d="M4.5 2H15.5M2 4.5V15.5M4.5 18H9M17.5 4.5V12" fill="none" stroke="#444" stroke-width="1.2"/><rect x="0.8" y="0.8" width="2.4" height="2.4" fill="#333"/><rect x="16.3" y="0.8" width="2.4" height="2.4" fill="#333"/><rect x="0.8" y="16.8" width="2.4" height="2.4" fill="#333"/><path d="M13.3 14.5V13Q13.3 10.8 15.7 10.8Q18.1 10.8 18.1 13V14.5" fill="none" stroke="#d93a3a" stroke-width="1.4"/><rect x="11.5" y="14.5" width="8.5" height="6.5" fill="#dd4444"/><rect x="13" y="16" width="5.5" height="3.5" fill="#e98a8a"/></svg>
<div class="t" style="left:191.2px;top:524px;font-size:13.1px;color:#333;font-weight:400;">Sketch1</div>
<div class="a" style="left:6px;top:926px;width:375px;height:31px;background:#f1f1f1;border:1px solid #c9c9c9;border-top-color:#e8e8e8"></div>
<div class="t" style="left:38px;top:936px;font-size:12.1px;color:#555;font-weight:400;">COMMENTS</div>
<svg style="left:355px;top:936px;" width="11" height="11" viewBox="0 0 11 11"><circle cx="5.5" cy="5.5" r="5.5" fill="#333"/><rect x="2.5" y="4.6" width="6" height="1.8" fill="#fff"/><rect x="4.6" y="2.5" width="1.8" height="6" fill="#fff"/></svg>
<div class="a" style="left:374.8px;top:935px;width:1.2px;height:13.5px;background:#7a7a7a;"></div>
<div class="a" style="left:377.3px;top:937.5px;width:1.6px;height:8.5px;background:#aaaaaa;"></div>
<div class="a" style="left:562px;top:928px;width:220px;height:30px;background:#f0f0f0;"></div>
<svg style="left:0px;top:0px;" width="1419" height="1028" viewBox="0 0 1419 1028"><path d="M576 934Q571 934 571 943Q571 952 576 952.5" fill="none" stroke="#555" stroke-width="1.3"/><path d="M576 934Q578.5 934.5 579 936" fill="none" stroke="#555" stroke-width="1.3"/><path d="M576 952.5Q578 952 578.5 950" fill="none" stroke="#555" stroke-width="1.3"/><path d="M569 940Q566 941 566 942.5Q566 944.5 569 945" fill="none" stroke="#555" stroke-width="1.3"/><path d="M573 945.5H579Q586 945 586 942Q586 940 583 939" fill="none" stroke="#555" stroke-width="1.3"/><path d="M575 940L577.5 942.5L575 945L572.5 942.5Z" fill="#2b8de8"/><path d="M577.5 935.5V939.5M575.5 937.5H579.5" stroke="#333" stroke-width="1.3"/><path d="M580 940.5L582.5 938L582.5 943Z" fill="#333"/><path d="M592.5 940H599.5L596 944.5Z" fill="#333"/><path d="M609.5 939.5L612.5 933.5L617 937L622.5 934L623 939.5Z" fill="#f6f6f6" stroke="#555" stroke-width="1.2" stroke-linejoin="round"/><rect x="607.6" y="939.8" width="19" height="12.4" rx="1" fill="#f8f8f8" stroke="#555" stroke-width="1.4"/><rect x="611.3" y="943.2" width="11.6" height="5.6" fill="#a5abb8" stroke="#444" stroke-width="1"/><path d="M648 952Q644 950 642.5 947L639.5 943Q639 941.5 640.5 941.5Q642 941.5 644 944V937Q644 935.5 645.3 935.5Q646.5 935.5 646.7 937V941V934.5Q646.7 933 648.2 933Q649.7 933 649.8 934.5V941V935Q649.8 933.5 651.3 933.5Q652.8 933.5 652.8 935V941.5L654 937Q654.5 935.7 655.8 936Q657 936.4 656.8 937.8L655.5 944Q655 949 652 952Z" fill="#f4f4f4" stroke="#555" stroke-width="1.2" stroke-linejoin="round"/><circle cx="678" cy="941.8" r="5.4" fill="#e6eff2" stroke="#444" stroke-width="1.5"/><path d="M682 946L686.5 950.5" stroke="#444" stroke-width="2.8" stroke-linecap="round"/><path d="M685.5 936H691.5M688.5 933V939M686 941.5H692" stroke="#333" stroke-width="1.1"/><circle cx="712.3" cy="941.5" r="7.2" fill="#eef3f4" stroke="#444" stroke-width="1.6"/><rect x="708.5" y="937.8" width="7.5" height="7.5" fill="#e8e8ec" stroke="#555" stroke-width="1.1"/><path d="M717.5 946.5L723 952" stroke="#444" stroke-width="2.8" stroke-linecap="round"/><path d="M731.5 940.5H738L734.75 944.5Z" fill="#333"/><rect x="746" y="933.5" width="19" height="15" rx="1.5" fill="#ececec" stroke="#666" stroke-width="1.2"/><rect x="748.3" y="935.8" width="14.4" height="10.4" rx="0.8" fill="#9cb7de" stroke="#3e5a88" stroke-width="1"/><path d="M752.5 948.5L751.5 951.5H759.5L758.5 948.5" fill="#ddd" stroke="#666" stroke-width="1"/><path d="M768.5 940.5H775L771.75 944.5Z" fill="#333"/></svg>
<div class="a" style="left:0px;top:963px;width:1419px;height:65px;background:#f1f1f1;"></div>
<div class="a" style="left:0px;top:962.5px;width:1419px;height:1.5px;background:#e4e4e4;"></div>
<div class="a" style="left:1px;top:962.5px;width:168px;height:1.5px;background:#d6d6d6;"></div>
<div class="a" style="left:1365px;top:962.5px;width:54px;height:1.5px;background:#d6d6d6;"></div>
<svg style="left:0px;top:0px;" width="1419" height="1028" viewBox="0 0 1419 1028"><rect x="14.5" y="985.5" width="2.5" height="17.5" fill="#4a4a4a"/><path d="M30 985.5V1003L17.5 994.25Z" fill="#4a4a4a"/><path d="M56 986V1002L45 994Z" fill="#4a4a4a"/><rect x="57.5" y="990" width="3" height="8" fill="#4a4a4a"/><path d="M76.7 984.3V1003.9L91.3 994.1Z" fill="#4a4a4a"/><rect x="107" y="990" width="3" height="8" fill="#4a4a4a"/><path d="M112 986V1002L123 994Z" fill="#4a4a4a"/><path d="M139.8 985.5V1003L152.5 994.25Z" fill="#4a4a4a"/><rect x="152.7" y="985.5" width="2.5" height="17.5" fill="#4a4a4a"/><rect x="181" y="973" width="115" height="7.5" fill="#e8449e"/><path d="M291 976H306V980L299.5 987V1016H297.5V987L291 980Z" fill="#666"/><path d="M184.5 1014.5H284.5M194.4 1007V1014.5M223.3 1007V1014.5M253.7 1007V1014.5M283.7 1007V1014.5" stroke="#cdcdcd" stroke-width="2.2"/><path d="M187.5 984.5H199M185 987V998M187.5 1000H192M201 987V991" fill="none" stroke="#666" stroke-width="1.1"/><rect x="184" y="983.5" width="2.5" height="2.5" fill="#1e88e5"/><rect x="199.5" y="983.5" width="2.5" height="2.5" fill="#1e88e5"/><rect x="184" y="999.5" width="2.5" height="2.5" fill="#1e88e5"/><path d="M194 1001L201 993.5L203.5 996L196.5 1003.5L193 1004Z" fill="#f5b942"/><circle cx="202.5" cy="994.5" r="1.8" fill="#e53935"/><polygon points="213,999 226,999 230,995.5 230,998 226,1002 213,1002" fill="#c4c4c4"/><polygon points="213,988 217,984 230,984 226,988" fill="#8ccbfa"/><polygon points="226,988 230,984 230,995.5 226,999" fill="#4a95d1"/><rect x="213" y="988" width="13" height="11" fill="#69aee6"/><path d="M233 999.5V985.5" stroke="#222" stroke-width="1"/><path d="M231.2 987.5L233 984L234.8 987.5Z" fill="#222"/><polygon points="243,999 256,999 260,995.5 260,998 256,1002 243,1002" fill="#c4c4c4"/><polygon points="243,988 247,984 260,984 256,988" fill="#8ccbfa"/><polygon points="256,988 260,984 260,995.5 256,999" fill="#4a95d1"/><rect x="243" y="988" width="13" height="11" fill="#69aee6"/><path d="M263 999.5V985.5" stroke="#222" stroke-width="1"/><path d="M261.2 987.5L263 984L264.8 987.5Z" fill="#222"/><polygon points="273,999 286,999 290,995.5 290,998 286,1002 273,1002" fill="#c4c4c4"/><polygon points="273,988 277,984 290,984 286,988" fill="#8ccbfa"/><polygon points="286,988 290,984 290,995.5 286,999" fill="#4a95d1"/><rect x="273" y="988" width="13" height="11" fill="#69aee6"/><path d="M293 999.5V985.5" stroke="#222" stroke-width="1"/><path d="M291.2 987.5L293 984L294.8 987.5Z" fill="#222"/><g transform="translate(1394.8 994.5)"><rect x="-2.2" y="-10" width="4.4" height="20" rx="0.8" fill="#999" transform="rotate(0)"/><rect x="-2.2" y="-10" width="4.4" height="20" rx="0.8" fill="#999" transform="rotate(45)"/><rect x="-2.2" y="-10" width="4.4" height="20" rx="0.8" fill="#999" transform="rotate(90)"/><rect x="-2.2" y="-10" width="4.4" height="20" rx="0.8" fill="#999" transform="rotate(135)"/><circle r="7.2" fill="#999"/><circle r="3.2" fill="#f1f1f1"/></g></svg>
<div class="a" style="left:782px;top:65px;width:525px;height:916px;background:#f2f2f2;border:1px solid #c6c6c6"></div>
<svg style="left:789px;top:75px;" width="12" height="12" viewBox="0 0 12 12"><circle cx="6" cy="6" r="6" fill="#333"/><rect x="2.6" y="5.1" width="6.8" height="1.8" fill="#fff"/></svg>
<div class="t" style="left:813px;top:74px;font-size:12.6px;color:#555;font-weight:400;">APPEARANCE</div>
<div class="a" style="left:783px;top:95px;width:523px;height:1px;background:#cfcfcf;"></div>
<svg style="left:795px;top:110.8px;" width="11" height="8" viewBox="0 0 11 8"><path d="M0 0H11L5.5 8Z" fill="#333"/></svg>
<div class="t" style="left:813px;top:109px;font-size:13.8px;color:#3a3a3a;font-weight:700;">Apply To:</div>
<div class="t" style="left:798.7px;top:146px;font-size:13.2px;color:#333;font-weight:400;">Bodies/Components</div>
<svg style="left:1003px;top:143px;" width="18" height="18" viewBox="0 0 18 18"><defs><radialGradient id="rg1" cx="0.5" cy="0.3" r="0.7"><stop offset="0" stop-color="#fff"/><stop offset="1" stop-color="#c8c8c8"/></radialGradient></defs><circle cx="9" cy="9" r="8.2" fill="url(#rg1)" stroke="#444" stroke-width="1.6"/><circle cx="9" cy="9" r="4.6" fill="#000"/></svg>
<div class="t" style="left:798.7px;top:184px;font-size:13.4px;color:#333;font-weight:400;">Faces</div>
<svg style="left:1003px;top:181px;" width="18" height="18" viewBox="0 0 18 18"><defs><linearGradient id="rg2" x1="0" y1="0" x2="0" y2="1"><stop offset="0" stop-color="#fafafa"/><stop offset="1" stop-color="#bdbdbd"/></linearGradient></defs><circle cx="9" cy="9" r="8.2" fill="url(#rg2)" stroke="#555" stroke-width="1.4"/></svg>
<div class="a" style="left:784px;top:214px;width:506px;height:1.5px;background:#c9c9c9;"></div>
<svg style="left:795px;top:236px;" width="11" height="8" viewBox="0 0 11 8"><path d="M0 0H11L5.5 8Z" fill="#333"/></svg>
<div class="t" style="left:813px;top:233px;font-size:14.2px;color:#404040;font-weight:700;">In This Design</div>
<div class="a" style="left:794px;top:261px;width:474px;height:140px;background:#f9f9f9;"></div>
<div class="a" style="left:799px;top:267px;width:66px;height:63px;background:#ffffff;"></div>
<svg style="left:804.5px;top:271px;" width="55" height="55" viewBox="0 0 55 55"><defs><linearGradient id="tbg" x1="0" y1="0" x2="0" y2="1"><stop offset="0" stop-color="#838383"/><stop offset="0.72" stop-color="#7e7e7e"/><stop offset="1" stop-color="#626262"/></linearGradient><linearGradient id="trg" x1="0" y1="0" x2="1" y2="0.3"><stop offset="0" stop-color="#8a8a8a"/><stop offset="0.45" stop-color="#6e6e6e"/><stop offset="0.8" stop-color="#4a4a4a"/><stop offset="1" stop-color="#2a2a2a"/></linearGradient></defs><rect width="55" height="55" fill="url(#tbg)"/><ellipse cx="28" cy="47" rx="18" ry="4" fill="#555" opacity="0.5"/><g transform="rotate(-22 27.7 27)"><ellipse cx="28" cy="27" rx="20.5" ry="23" fill="url(#trg)" stroke="#2a2a2a" stroke-width="1.2"/><ellipse cx="25.5" cy="27.5" rx="14" ry="17" fill="#7a7a7a" stroke="#2c2c2c" stroke-width="1.3"/><ellipse cx="27.5" cy="28.5" rx="8.3" ry="10.8" fill="#828282" stroke="#3a3a3a" stroke-width="1.4"/><path d="M12 12Q20 4 34 5.5" fill="none" stroke="#f6f6f6" stroke-width="2.6" stroke-linecap="round"/><path d="M19 42Q25 46 32 43" fill="none" stroke="#ffffff" stroke-width="3" stroke-linecap="round"/><path d="M43 11Q48 16 48.5 23" fill="none" stroke="#e8e8e8" stroke-width="1.6" stroke-linecap="round"/><path d="M15 34Q13 23 19 15" fill="none" stroke="#bdbdbd" stroke-width="1.6"/><path d="M18.5 31Q17.5 33.5 19 36" fill="none" stroke="#f0f0f0" stroke-width="2"/><path d="M21 16Q26 14 30 17" fill="none" stroke="#2a2a2a" stroke-width="2"/></g></svg>
<div class="a" style="left:784px;top:409px;width:506px;height:1.5px;background:#c9c9c9;"></div>
<svg style="left:795px;top:431px;" width="11" height="8" viewBox="0 0 11 8"><path d="M0 0H11L5.5 8Z" fill="#333"/></svg>
<div class="t" style="left:813px;top:428px;font-size:14.2px;color:#3a3a3a;font-weight:700;">Library</div>
<div class="a" style="left:794px;top:456px;width:473px;height:28px;background:#fbfbfb;border:1.5px solid #6f6f6f;border-radius:2px"></div>
<div class="t" style="left:800px;top:466px;font-size:13.8px;color:#7a7a7a;font-weight:400;">Search</div>
<svg style="left:1245px;top:462px;" width="16" height="16" viewBox="0 0 16 16"><circle cx="6" cy="6" r="5" fill="#fff" stroke="#333" stroke-width="1.6"/><path d="M9.5 9.5L14.5 14.5" stroke="#333" stroke-width="2.6" stroke-linecap="round"/></svg>
<div class="a" style="left:794px;top:494px;width:473px;height:32px;background:#dcdcdc;"></div>
<div class="a" style="left:794px;top:525px;width:473px;height:1px;background:#cfcfcf;"></div>
<div class="a" style="left:830px;top:494px;width:165px;height:32px;background:#dcdcdc;border-left:1px solid #c6c6c6;border-top:1px solid #c6c6c6;border-right:1px solid #c6c6c6"></div>
<svg style="left:800px;top:498px;" width="22" height="22" viewBox="0 0 22 22"><path d="M3.5 10Q4.5 3.5 11 3.5Q15.5 3.5 18 7" fill="none" stroke="#555" stroke-width="2.6"/><path d="M19.5 2V9H12.5Z" fill="#555"/><path d="M18.5 12Q17.5 18.5 11 18.5Q6.5 18.5 4 15" fill="none" stroke="#555" stroke-width="2.6"/><path d="M2.5 20V13H9.5Z" fill="#555"/></svg>
<div class="t" style="left:837px;top:504px;font-size:13.6px;color:#333;font-weight:400;">Fusion 360 Appearances</div>
<svg style="left:1003px;top:501px;" width="21" height="15" viewBox="0 0 21 15"><defs><linearGradient id="cl" x1="0" y1="0" x2="0" y2="1"><stop offset="0" stop-color="#c4d2ee"/><stop offset="1" stop-color="#8aa0cf"/></linearGradient></defs><path d="M4 14.5Q0.5 14.5 0.8 11Q1 8 4.5 8Q5 3.5 9.5 1.5Q14.5 0.5 16 5Q20.5 5.5 20.3 10Q20 14.5 16 14.5Z" fill="url(#cl)" stroke="#6d84b8" stroke-width="1"/></svg>
<div class="t" style="left:1031px;top:504px;font-size:13.6px;color:#333;font-weight:400;">My Appearances</div>
<div class="a" style="left:1140px;top:496px;width:1px;height:30px;background:#d0d0d0;"></div>
<div class="t" style="left:1148px;top:504px;font-size:13.5px;color:#333;font-weight:400;">Favorites</div>
<div class="a" style="left:1211px;top:496px;width:1px;height:30px;background:#d0d0d0;"></div>
<div class="t" style="left:801px;top:546px;font-size:13.7px;color:#333;font-weight:400;">Show downloadable materials</div>
<svg style="left:1007.5px;top:544px;" width="16" height="16" viewBox="0 0 16 16"><defs><linearGradient id="cbg" x1="0" y1="0" x2="0.3" y2="1"><stop offset="0" stop-color="#a8a8a8"/><stop offset="1" stop-color="#e2e2e2"/></linearGradient></defs><rect x="0.8" y="0.8" width="14.4" height="14.4" rx="2.5" fill="url(#cbg)" stroke="#666" stroke-width="1.4"/><path d="M3.5 8L6.5 11.5L12.5 3" fill="none" stroke="#111" stroke-width="1.4"/></svg>
<div class="t" style="left:1123.4px;top:546px;font-size:13.4px;color:#c2c2c2;font-weight:400;">Cancel all Downloads</div>
<div class="a" style="left:1257px;top:581px;width:10px;height:350px;background:#c3c3c5;"></div>
<div class="a" style="left:1257px;top:676px;width:10px;height:120px;background:#9b9b9b;border-radius:5px"></div>
<svg style="left:794px;top:588.5px;" width="19" height="16" viewBox="0 0 19 16"><path d="M1.5 3.5H17.5V15.5H1.5Z" fill="#f4f6f8" stroke="#4a4f55" stroke-width="1.3" stroke-linejoin="round"/><path d="M1.5 3.5V1H7.5L8.5 3.5" fill="#e8e8e8" stroke="#4a4f55" stroke-width="1.3" stroke-linejoin="round"/><path d="M1.5 5.5H17.5" stroke="#4a4f55" stroke-width="1"/></svg>
<div class="t" style="left:820px;top:590px;font-size:13.1px;color:#333;font-weight:400;">Other</div>
<svg style="left:794px;top:620px;" width="19" height="16" viewBox="0 0 19 16"><path d="M1.5 3.5H17.5V15.5H1.5Z" fill="#f4f6f8" stroke="#4a4f55" stroke-width="1.3" stroke-linejoin="round"/><path d="M1.5 3.5V1H7.5L8.5 3.5" fill="#e8e8e8" stroke="#4a4f55" stroke-width="1.3" stroke-linejoin="round"/><path d="M1.5 5.5H17.5" stroke="#4a4f55" stroke-width="1"/></svg>
<div class="t" style="left:820px;top:621px;font-size:13.1px;color:#333;font-weight:400;">Paint</div>
<svg style="left:813px;top:651px;" width="19" height="16" viewBox="0 0 19 16"><path d="M1.5 3.5H17.5V15.5H1.5Z" fill="#f4f6f8" stroke="#4a4f55" stroke-width="1.3" stroke-linejoin="round"/><path d="M1.5 3.5V1H7.5L8.5 3.5" fill="#e8e8e8" stroke="#4a4f55" stroke-width="1.3" stroke-linejoin="round"/><path d="M1.5 5.5H17.5" stroke="#4a4f55" stroke-width="1"/></svg>
<div class="t" style="left:838.2px;top:652px;font-size:13.1px;color:#333;font-weight:400;">Glossy</div>
<div class="a" style="left:892px;top:677px;width:365px;height:60px;background:#f9f9f9;"></div>
<svg style="left:832px;top:677px;" width="60" height="60" viewBox="0 0 60 60"><defs><radialGradient id="sp0" cx="0.5" cy="0.62" r="0.62"><stop offset="0" stop-color="#161616"/><stop offset="0.7" stop-color="#161616"/><stop offset="1" stop-color="#2c2c2c"/></radialGradient><linearGradient id="bg0" x1="0" y1="0" x2="0" y2="1"><stop offset="0" stop-color="#7e7e7e"/><stop offset="0.65" stop-color="#7a7a7a"/><stop offset="1" stop-color="#555"/></linearGradient><radialGradient id="fs0" cx="0.5" cy="0.5" r="0.5"><stop offset="0" stop-color="#000" stop-opacity="0.9"/><stop offset="1" stop-color="#000" stop-opacity="0"/></radialGradient><radialGradient id="gl0" cx="0.5" cy="0.5" r="0.5"><stop offset="0" stop-color="#444"/><stop offset="1" stop-color="#444" stop-opacity="0"/></radialGradient><clipPath id="cp0"><rect width="60" height="60"/></clipPath><clipPath id="cs0"><circle cx="30.5" cy="30.5" r="27.5"/></clipPath></defs><g clip-path="url(#cp0)"><rect width="60" height="60" fill="url(#bg0)"/><ellipse cx="30.5" cy="56.5" rx="16" ry="3.2" fill="url(#fs0)"/><circle cx="30.5" cy="30.5" r="27.5" fill="url(#sp0)"/><g clip-path="url(#cs0)"><path d="M4 29Q8 6 30.3 4Q52 6 57 29Q30 22 4 29Z" fill="#101010" opacity="0.85"/><path d="M11 35Q11 15 30.5 15Q50 15 50 35Q30.5 42 11 35Z" fill="#070707"/><ellipse cx="30.5" cy="14" rx="8" ry="8" fill="url(#gl0)"/></g><path d="M9.5 20.5Q13.5 12.5 21.5 9.5L24.3 18.5Q18.5 20.5 15.5 26.5Z" fill="#c9c9c9"/><path d="M51.5 20.5Q47.5 12.5 39.5 9.5L36.7 18.5Q42.5 20.5 45.5 26.5Z" fill="#c9c9c9"/><circle cx="30.5" cy="30.5" r="27.2" fill="none" stroke="#777" stroke-width="0.8" opacity="0.55"/></g></svg>
<div class="t" style="left:897px;top:702px;font-size:13.2px;color:#333;font-weight:400;">Paint - Enamel Glossy (Black)</div>
<div class="a" style="left:892px;top:743px;width:365px;height:60px;background:#f9f9f9;"></div>
<svg style="left:832px;top:743px;" width="60" height="60" viewBox="0 0 60 60"><defs><radialGradient id="sp1" cx="0.5" cy="0.62" r="0.62"><stop offset="0" stop-color="#1c2488"/><stop offset="0.7" stop-color="#1c2488"/><stop offset="1" stop-color="#3848cc"/></radialGradient><linearGradient id="bg1" x1="0" y1="0" x2="0" y2="1"><stop offset="0" stop-color="#7e7e7e"/><stop offset="0.65" stop-color="#7a7a7a"/><stop offset="1" stop-color="#555"/></linearGradient><radialGradient id="fs1" cx="0.5" cy="0.5" r="0.5"><stop offset="0" stop-color="#000" stop-opacity="0.9"/><stop offset="1" stop-color="#000" stop-opacity="0"/></radialGradient><radialGradient id="gl1" cx="0.5" cy="0.5" r="0.5"><stop offset="0" stop-color="#6070d8"/><stop offset="1" stop-color="#6070d8" stop-opacity="0"/></radialGradient><clipPath id="cp1"><rect width="60" height="60"/></clipPath><clipPath id="cs1"><circle cx="30.5" cy="30.5" r="27.5"/></clipPath></defs><g clip-path="url(#cp1)"><rect width="60" height="60" fill="url(#bg1)"/><ellipse cx="30.5" cy="56.5" rx="16" ry="3.2" fill="url(#fs1)"/><circle cx="30.5" cy="30.5" r="27.5" fill="url(#sp1)"/><g clip-path="url(#cs1)"><path d="M4 29Q8 6 30.3 4Q52 6 57 29Q30 22 4 29Z" fill="#2a36c8" opacity="0.85"/><path d="M11 35Q11 15 30.5 15Q50 15 50 35Q30.5 42 11 35Z" fill="#1a22b0"/><ellipse cx="30.5" cy="14" rx="8" ry="8" fill="url(#gl1)"/></g><path d="M9.5 20.5Q13.5 12.5 21.5 9.5L24.3 18.5Q18.5 20.5 15.5 26.5Z" fill="#c6caec"/><path d="M51.5 20.5Q47.5 12.5 39.5 9.5L36.7 18.5Q42.5 20.5 45.5 26.5Z" fill="#c6caec"/><circle cx="30.5" cy="30.5" r="27.2" fill="none" stroke="#8890d8" stroke-width="0.8" opacity="0.55"/></g></svg>
<div class="t" style="left:897px;top:768px;font-size:13.2px;color:#333;font-weight:400;">Paint - Enamel Glossy (Blue)</div>
<div class="a" style="left:892px;top:809px;width:365px;height:60px;background:#f9f9f9;"></div>
<svg style="left:832px;top:809px;" width="60" height="60" viewBox="0 0 60 60"><defs><radialGradient id="sp2" cx="0.5" cy="0.62" r="0.62"><stop offset="0" stop-color="#383838"/><stop offset="0.7" stop-color="#383838"/><stop offset="1" stop-color="#4a4a4a"/></radialGradient><linearGradient id="bg2" x1="0" y1="0" x2="0" y2="1"><stop offset="0" stop-color="#7e7e7e"/><stop offset="0.65" stop-color="#7a7a7a"/><stop offset="1" stop-color="#555"/></linearGradient><radialGradient id="fs2" cx="0.5" cy="0.5" r="0.5"><stop offset="0" stop-color="#000" stop-opacity="0.9"/><stop offset="1" stop-color="#000" stop-opacity="0"/></radialGradient><radialGradient id="gl2" cx="0.5" cy="0.5" r="0.5"><stop offset="0" stop-color="#6a6a6a"/><stop offset="1" stop-color="#6a6a6a" stop-opacity="0"/></radialGradient><clipPath id="cp2"><rect width="60" height="60"/></clipPath><clipPath id="cs2"><circle cx="30.5" cy="30.5" r="27.5"/></clipPath></defs><g clip-path="url(#cp2)"><rect width="60" height="60" fill="url(#bg2)"/><ellipse cx="30.5" cy="56.5" rx="16" ry="3.2" fill="url(#fs2)"/><circle cx="30.5" cy="30.5" r="27.5" fill="url(#sp2)"/><g clip-path="url(#cs2)"><path d="M4 29Q8 6 30.3 4Q52 6 57 29Q30 22 4 29Z" fill="#404040" opacity="0.85"/><path d="M11 35Q11 15 30.5 15Q50 15 50 35Q30.5 42 11 35Z" fill="#2e2e2e"/><ellipse cx="30.5" cy="14" rx="8" ry="8" fill="url(#gl2)"/></g><path d="M9.5 20.5Q13.5 12.5 21.5 9.5L24.3 18.5Q18.5 20.5 15.5 26.5Z" fill="#d2d2d2"/><path d="M51.5 20.5Q47.5 12.5 39.5 9.5L36.7 18.5Q42.5 20.5 45.5 26.5Z" fill="#d2d2d2"/><circle cx="30.5" cy="30.5" r="27.2" fill="none" stroke="#9a9a9a" stroke-width="0.8" opacity="0.55"/></g></svg>
<div class="t" style="left:897px;top:834px;font-size:13.2px;color:#333;font-weight:400;">Paint - Enamel Glossy (Dark Grey)</div>
<div class="a" style="left:892px;top:875px;width:365px;height:56px;background:#f9f9f9;"></div>
<svg style="left:832px;top:875px;" width="60" height="56" viewBox="0 0 60 56"><defs><radialGradient id="sp3" cx="0.5" cy="0.62" r="0.62"><stop offset="0" stop-color="#1e8424"/><stop offset="0.7" stop-color="#1e8424"/><stop offset="1" stop-color="#44b448"/></radialGradient><linearGradient id="bg3" x1="0" y1="0" x2="0" y2="1"><stop offset="0" stop-color="#7e7e7e"/><stop offset="0.65" stop-color="#7a7a7a"/><stop offset="1" stop-color="#555"/></linearGradient><radialGradient id="fs3" cx="0.5" cy="0.5" r="0.5"><stop offset="0" stop-color="#000" stop-opacity="0.9"/><stop offset="1" stop-color="#000" stop-opacity="0"/></radialGradient><radialGradient id="gl3" cx="0.5" cy="0.5" r="0.5"><stop offset="0" stop-color="#60c860"/><stop offset="1" stop-color="#60c860" stop-opacity="0"/></radialGradient><clipPath id="cp3"><rect width="60" height="56"/></clipPath><clipPath id="cs3"><circle cx="30.5" cy="30.5" r="27.5"/></clipPath></defs><g clip-path="url(#cp3)"><rect width="60" height="60" fill="url(#bg3)"/><ellipse cx="30.5" cy="56.5" rx="16" ry="3.2" fill="url(#fs3)"/><circle cx="30.5" cy="30.5" r="27.5" fill="url(#sp3)"/><g clip-path="url(#cs3)"><path d="M4 29Q8 6 30.3 4Q52 6 57 29Q30 22 4 29Z" fill="#32aa36" opacity="0.85"/><path d="M11 35Q11 15 30.5 15Q50 15 50 35Q30.5 42 11 35Z" fill="#1c9424"/><ellipse cx="30.5" cy="14" rx="8" ry="8" fill="url(#gl3)"/></g><path d="M9.5 20.5Q13.5 12.5 21.5 9.5L24.3 18.5Q18.5 20.5 15.5 26.5Z" fill="#cce8cc"/><path d="M51.5 20.5Q47.5 12.5 39.5 9.5L36.7 18.5Q42.5 20.5 45.5 26.5Z" fill="#cce8cc"/><circle cx="30.5" cy="30.5" r="27.2" fill="none" stroke="#8fd08f" stroke-width="0.8" opacity="0.55"/></g></svg>
<div class="t" style="left:897px;top:900px;font-size:13.2px;color:#333;font-weight:400;">Paint - Enamel Glossy (Green)</div>
<div class="a" style="left:783px;top:935px;width:523px;height:1px;background:#d8d8d8;"></div>
<div class="a" style="left:785px;top:608px;width:494px;height:331px;background:transparent;border:5px solid #ec1c24"></div>
<svg style="left:793px;top:950px;" width="16" height="16" viewBox="0 0 16 16"><circle cx="8" cy="8" r="8" fill="#111"/><rect x="6.6" y="6.6" width="2.8" height="6" fill="#fff"/><circle cx="8" cy="4" r="1.5" fill="#fff"/></svg>
<div class="a" style="left:1217px;top:946px;width:75px;height:24px;background:#e8e8e8;border:1px solid #c4c4c4"></div>
<div class="t" style="left:1234px;top:951px;font-size:15.7px;color:#666;font-weight:400;">Close</div>
<div class="a" style="left:1209px;top:938px;width:92px;height:39px;background:transparent;border:5px solid #22b14c"></div>
</body></html>
